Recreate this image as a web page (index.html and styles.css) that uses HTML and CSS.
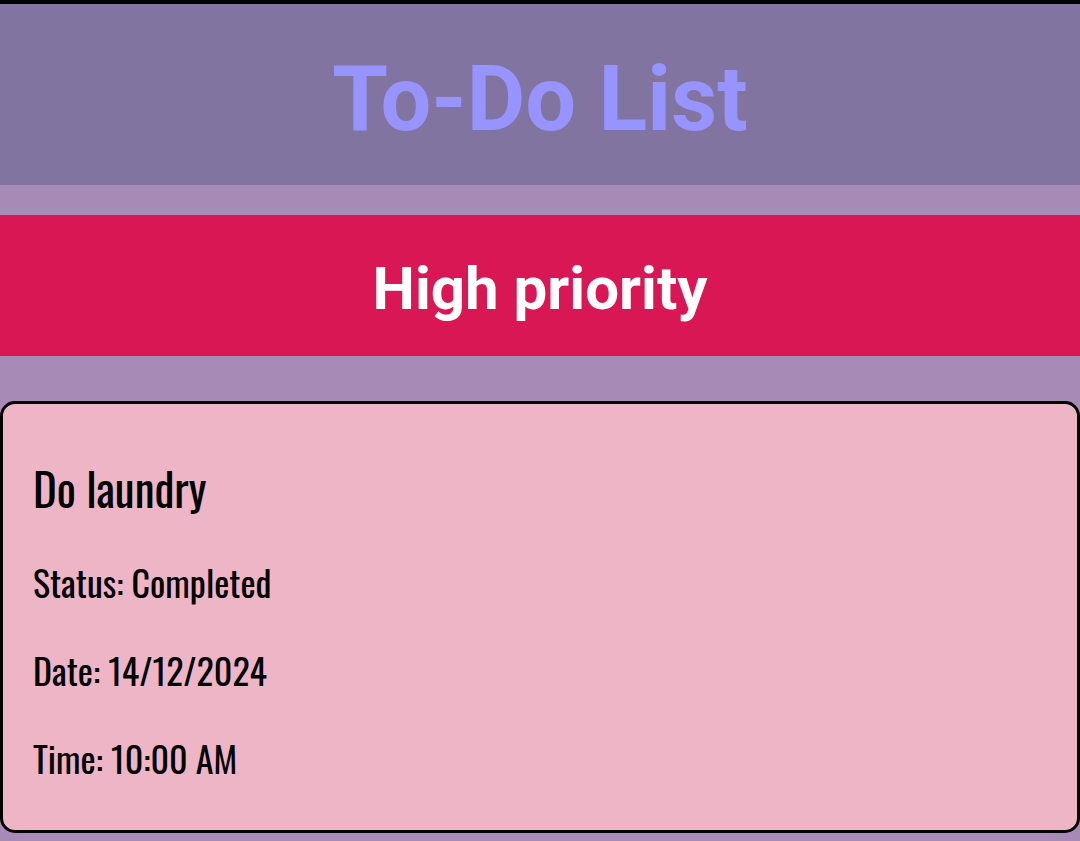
FILE: index.html
```html
<!DOCTYPE html>
<html lang="en">
<head>
<meta charset="utf-8">
<meta name="viewport" content="width=device-width, initial-scale=1">
<title>To-Do List</title>
<link rel="stylesheet" href="styles.css">
</head>
<body>
<header class="site-header">
  <h1 class="site-title">To-Do List</h1>
</header>
<main class="tasks">
  <h2 class="priority priority-high">High priority</h2>
  <article class="task">
    <h3 class="task-name">Do laundry</h3>
    <p class="task-detail">Status: Completed</p>
    <p class="task-detail">Date: 14/12/2024</p>
    <p class="task-detail">Time: 10:00 AM</p>
  </article>
</main>
</body>
</html>
```
FILE: styles.css
```css
* {
  box-sizing: border-box;
}

body {
  margin: 0;
  background: #a78ab5;
  color: #000;
  font-family: Roboto, sans-serif;
}

.site-header {
  padding: 45px 24px 34px;
  border-top: 4px solid #000;
  background: #8274a0;
  text-align: center;
}

.site-title {
  margin: 0;
  color: #9793ff;
  font-size: 90px;
  line-height: 102px;
  font-weight: 700;
}

.tasks {
  display: flex;
  flex-direction: column;
  padding: 30px 0 8px;
}

.priority {
  margin: 0 0 45px;
  padding: 39px 24px 33px;
  font-size: 60px;
  line-height: 69px;
  font-weight: 700;
  text-align: center;
}

.priority-high {
  background: #da1755;
  color: #fff;
}

.task {
  display: flex;
  flex-direction: column;
  gap: 35px;
  padding: 51px 30px 46px;
  border: 3px solid #000;
  border-radius: 15px;
  background: #eeb5c6;
  font-family: Oswald, "DejaVu Sans Condensed", sans-serif;
}

.task-name {
  margin: 0;
  font-size: 45px;
  line-height: 65px;
  font-weight: 400;
}

.task-detail {
  margin: 0;
  font-size: 36px;
  line-height: 53px;
  font-weight: 400;
}
```
